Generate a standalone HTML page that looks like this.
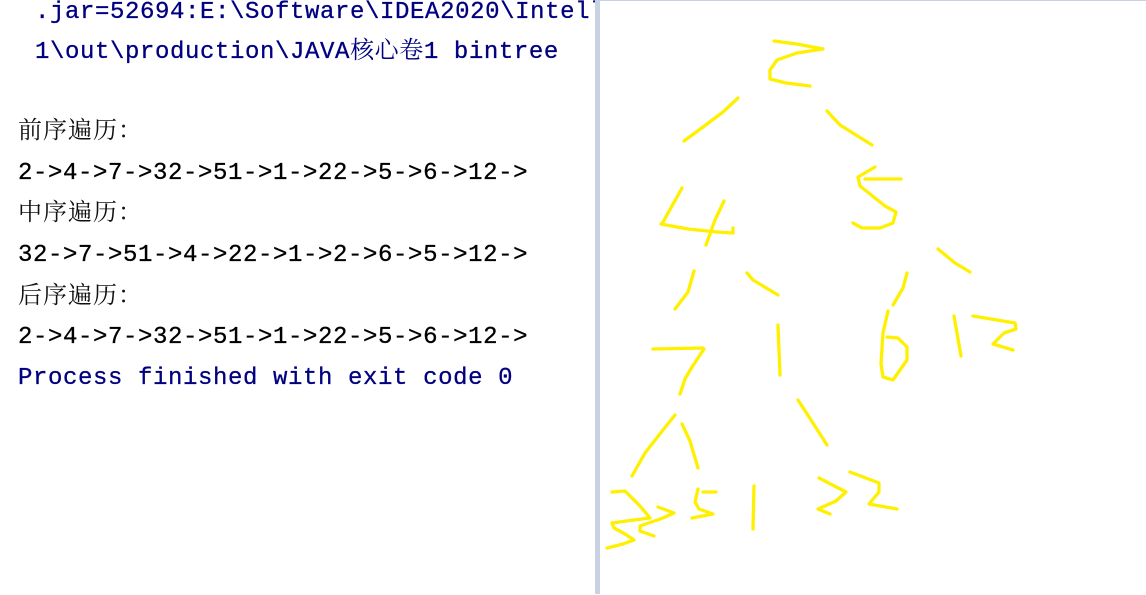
<!DOCTYPE html>
<html><head><meta charset="utf-8"><style>
body{margin:0;width:1146px;height:594px;background:#fff;position:relative;overflow:hidden}
.t{position:absolute;white-space:nowrap;font-family:"Liberation Mono",monospace;font-size:24px;letter-spacing:0.6px;line-height:30px;color:#000;-webkit-text-stroke:0.3px}
.n{color:#000080}
.c{font-family:"Liberation Serif","Noto Serif CJK SC",serif;font-size:24px;letter-spacing:1px;color:#111;-webkit-text-stroke:0}
</style></head><body>
<div class="t n" style="left:35px;top:-2px">.jar=52694:E:\Software\IDEA2020\IntelliJ</div>
<div class="t n" style="left:35px;top:33px">1\out\production\JAVA<span style="font-family:'Noto Serif CJK SC',serif;-webkit-text-stroke:0">核心卷</span>1 bintree</div>
<div class="t c" style="left:18px;top:116px">前序遍历：</div>
<div class="t" style="left:18px;top:159px">2-&gt;4-&gt;7-&gt;32-&gt;51-&gt;1-&gt;22-&gt;5-&gt;6-&gt;12-&gt;</div>
<div class="t c" style="left:18px;top:198px">中序遍历：</div>
<div class="t" style="left:18px;top:241px">32-&gt;7-&gt;51-&gt;4-&gt;22-&gt;1-&gt;2-&gt;6-&gt;5-&gt;12-&gt;</div>
<div class="t c" style="left:18px;top:281px">后序遍历：</div>
<div class="t" style="left:18px;top:323px">2-&gt;4-&gt;7-&gt;32-&gt;51-&gt;1-&gt;22-&gt;5-&gt;6-&gt;12-&gt;</div>
<div class="t n" style="left:18px;top:364px">Process finished with exit code 0</div>
<div style="position:absolute;left:595px;top:0;width:5px;height:594px;background:#c9d2e2"></div>
<div style="position:absolute;left:600px;top:0;width:546px;height:594px;background:#fff;border-top:1px solid #c9d2e2"></div>
<svg style="position:absolute;left:0;top:0" width="1146" height="594" fill="none" stroke="#fff000" stroke-width="3.3" stroke-linecap="round" stroke-linejoin="round">
<polyline points="774,41 797,44 823,49 797,53 777,60 770,70 770,79 786,83 810,86"/>
<polyline points="738,98 723,112 703,127 684,141"/>
<polyline points="827,111 840,125 872,145"/>
<polyline points="682,188 663,222 661,224 688,229 717,232 733,233 733,228"/>
<polyline points="724,201 715,220 706,245"/>
<polyline points="865,179 901,179"/>
<polyline points="875,167 858,177 860,186 885,206 896,212 893,223 880,228 862,228 853,223"/>
<polyline points="938,249 955,263 970,272"/>
<polyline points="694,271 688,292 675,309"/>
<polyline points="747,273 753,280 778,295"/>
<polyline points="907,273 903,288 893,305"/>
<polyline points="653,349 703,348 704,349 692,367 685,379 680,394"/>
<polyline points="778,325 780,375"/>
<polyline points="888,311 883,333 881,364 883,377 893,380 907,360 907,347 898,338 887,337"/>
<polyline points="954,316 961,356"/>
<polyline points="973,316 1015,323 1016,329 1004,333 993,344 1013,350"/>
<polyline points="675,415 663,430 645,453 632,476"/>
<polyline points="682,424 690,441 698,468"/>
<polyline points="798,400 811,420 827,445"/>
<polyline points="612,492 625,491 640,506 650,518 634,520 612,523 614,528 625,534 634,540 623,544 607,548"/>
<polyline points="658,507 674,513 663,518 640,526 640,531 654,536"/>
<polyline points="698,489 695,502 699,509 713,514 692,518"/>
<polyline points="703,492 716,492"/>
<polyline points="754,486 753,529"/>
<polyline points="819,478 846,492 836,501 818,509 830,514"/>
<polyline points="850,472 879,483 879,492 869,504 897,509"/>
</svg>
</body></html>
